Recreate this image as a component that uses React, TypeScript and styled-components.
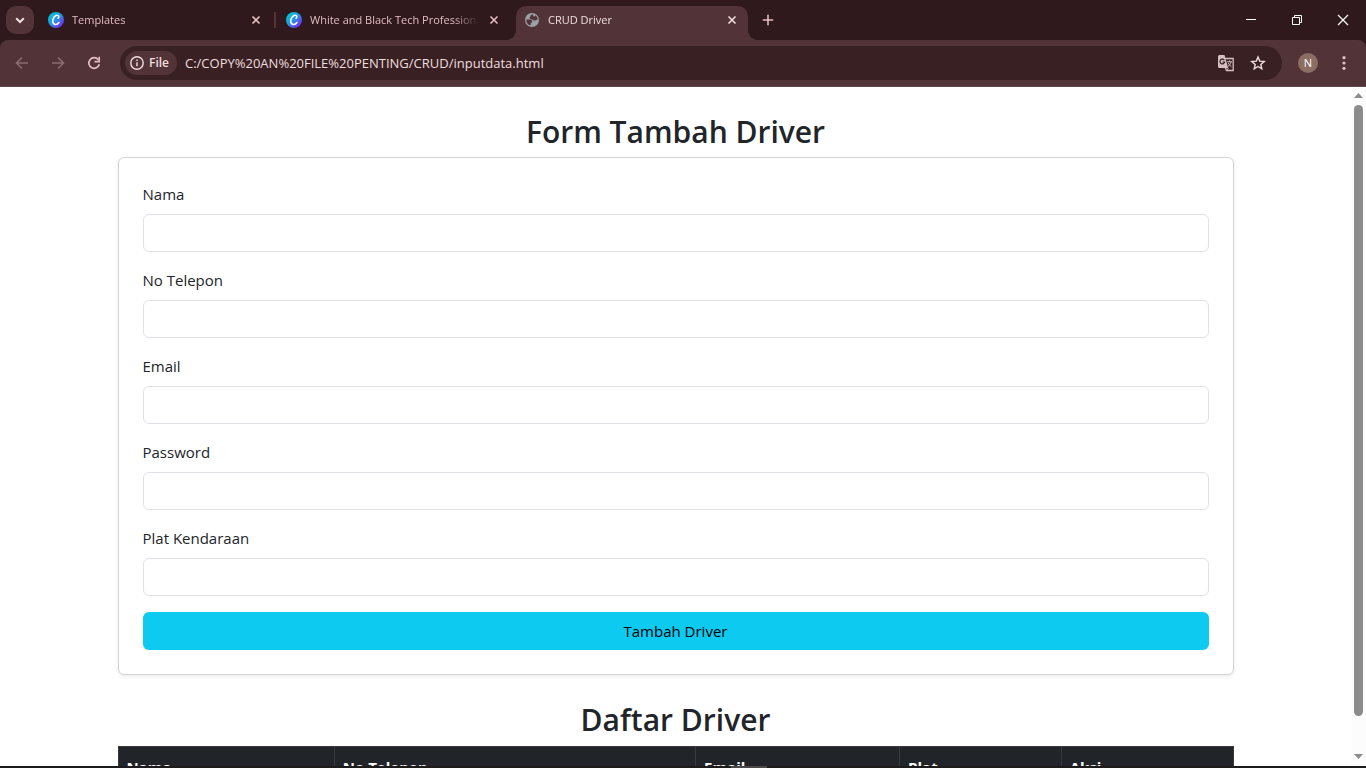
import React from "react";
import styled, { createGlobalStyle, css } from "styled-components";

const color = {
  frame: "#2f191c",
  toolbar: "#523438",
  field: "#382023",
  pink: "#e3bdc0",
  light: "#f0dedf",
  text: "#212529",
  line: "#dee2e6",
};

const GlobalStyle = createGlobalStyle`
  *, *::before, *::after { box-sizing: border-box; }
  body { margin: 0; background: #fff; color: ${color.text}; font: 400 15px/24px "Open Sans", "Noto Sans", sans-serif; }
  button, input { font: inherit; }
  button { padding: 0; border: 0; background: none; color: inherit; }
  svg { display: block; flex: none; }
`;

const Window = styled.div`
  display: flex;
  flex-direction: column;
  height: 100vh;
  overflow: hidden;
  background: ${color.frame};
`;

const TabBar = styled.header`
  display: flex;
  flex: none;
  height: 40px;
  padding-left: 6px;
  color: ${color.pink};
`;

const TabSearch = styled.button`
  display: grid;
  place-items: center;
  flex: none;
  width: 28px;
  height: 28px;
  margin: 6px 6px 0 0;
  border-radius: 10px;
  background: ${color.toolbar};
  color: ${color.light};
`;

const Tabs = styled.div`
  display: flex;
  flex: 0 1 auto;
  gap: 6px;
  min-width: 0;
  padding-top: 6px;
`;

const Tab = styled.div<{ $active?: boolean; $divider?: boolean }>`
  position: relative;
  display: flex;
  align-items: center;
  gap: 8px;
  flex: 0 1 232px;
  width: 232px;
  min-width: 0;
  height: 34px;
  padding: 0 8px 6px;
  font-size: 11px;
  line-height: 16px;

  ${(p) =>
    p.$divider &&
    css`
      &::after {
        content: "";
        position: absolute;
        top: 6px;
        right: -4px;
        width: 2px;
        height: 16px;
        background: ${color.toolbar};
      }
    `}

  ${(p) =>
    p.$active &&
    css`
      border-radius: 10px 10px 0 0;
      background: ${color.toolbar};
      color: ${color.light};

      &::before,
      &::after {
        content: "";
        position: absolute;
        bottom: 0;
        width: 10px;
        height: 10px;
      }
      &::before {
        left: -10px;
        background: radial-gradient(circle at 0 0, transparent 10px, ${color.toolbar} 10px);
      }
      &::after {
        right: -10px;
        background: radial-gradient(circle at 100% 0, transparent 10px, ${color.toolbar} 10px);
      }
    `}
`;

const TabTitle = styled.span`
  flex: 1;
  min-width: 0;
  overflow: hidden;
  white-space: nowrap;
  mask-image: linear-gradient(to right, #000 calc(100% - 24px), transparent);
`;

const IconButton = styled.button<{ $size: number }>`
  display: grid;
  place-items: center;
  flex: none;
  width: ${(p) => p.$size}px;
  height: ${(p) => p.$size}px;
`;

const NewTab = styled(IconButton)`
  margin: 6px 0 0 6px;
`;

const WindowButtons = styled.div`
  display: flex;
  margin-left: auto;
  color: #fff;
`;

const WindowButton = styled.button`
  display: grid;
  place-items: center;
  width: 46px;
  height: 40px;
`;

const Toolbar = styled.div`
  display: flex;
  align-items: center;
  flex: none;
  height: 47px;
  padding: 0 8px;
  border-bottom: 1px solid #61484b;
  border-radius: 8px 8px 0 0;
  background: ${color.toolbar};
  color: ${color.pink};
`;

const Navigation = styled.nav`
  display: flex;
  gap: 8px;
  margin-right: 12px;
`;

const NavButton = styled(IconButton)`
  &:disabled { color: #8b6c70; }
`;

const AddressBar = styled.div`
  display: flex;
  align-items: center;
  flex: 1;
  min-width: 0;
  height: 34px;
  padding: 0 10px 0 5px;
  border-radius: 17px;
  background: ${color.field};
  color: ${color.light};
`;

const SiteChip = styled.button`
  display: flex;
  align-items: center;
  gap: 4px;
  flex: none;
  height: 24px;
  padding: 0 8px 0 4px;
  border-radius: 12px;
  background: ${color.toolbar};
  font-size: 12px;
  font-weight: 600;
`;

const Address = styled.input`
  flex: 1;
  min-width: 0;
  padding: 0 8px;
  border: 0;
  outline: 0;
  background: none;
  color: ${color.light};
  font-size: 13px;
`;

const AddressActions = styled.div`
  display: flex;
  gap: 4px;
`;

const Profile = styled.button`
  flex: none;
  width: 20px;
  height: 20px;
  margin: 0 12px 0 16px;
  border-radius: 50%;
  background: #8d6e63;
  color: #fff;
  font-size: 11px;
  line-height: 20px;
`;

const Viewport = styled.div`
  display: flex;
  flex: 1;
  min-height: 0;
  background: #fff;
`;

const Page = styled.main`
  flex: 1;
  min-width: 0;
  overflow: hidden;
`;

const Container = styled.div`
  max-width: 1140px;
  margin: 0 auto;
  padding: 0 12px;
`;

const Heading = styled.h2`
  margin: 26px 0 6px;
  font-size: 30px;
  font-weight: 600;
  line-height: 1.28;
  text-align: center;
`;

const Card = styled.form`
  padding: 24px;
  border: 1px solid #d3d3d4;
  border-radius: 6px;
  background: #fff;
  box-shadow: 0 2px 4px rgba(0, 0, 0, 0.075);
`;

const Field = styled.div`
  margin-bottom: 16px;
`;

const Label = styled.label`
  display: block;
  width: fit-content;
  margin-bottom: 8px;
`;

const TextInput = styled.input`
  display: block;
  width: 100%;
  height: 38px;
  padding: 6px 12px;
  border: 1px solid ${color.line};
  border-radius: 6px;
  background: #fff;
  color: ${color.text};
`;

const Submit = styled.button`
  display: block;
  width: 100%;
  height: 38px;
  border-radius: 6px;
  background: #0dcaf0;
  color: #000;
`;

const DriverTable = styled.table`
  width: 100%;
  border-collapse: collapse;
  table-layout: fixed;
  background: ${color.text};
  color: #fff;
`;

const HeadCell = styled.th<{ $width: string }>`
  width: ${(p) => p.$width};
  padding: 8px;
  border: 1px solid #373b3e;
  font-weight: 700;
  text-align: left;
`;

const ScrollTrack = styled.div`
  display: flex;
  flex-direction: column;
  align-items: center;
  flex: none;
  width: 15px;
  padding: 6px 0;
  background: #fcfcfc;
  color: #8b8b8b;
`;

const ScrollArea = styled.div`
  flex: 1;
  width: 9px;
  margin: 6px 0;
`;

const ScrollThumb = styled.div`
  height: 95%;
  border-radius: 5px;
  background: #8b8b8b;
`;

const Taskbar = styled.footer`
  display: flex;
  justify-content: center;
  flex: none;
  height: 2px;
  padding-left: 132px;
  background: #1c1c1d;
`;

const TaskbarItem = styled.div`
  width: 36px;
  background: #4a4a4a;
`;

const CanvaLogo = ({ id }: { id: string }) => (
  <svg width="16" height="16" viewBox="0 0 16 16" aria-hidden="true">
    <defs>
      <linearGradient id={id} x1="0.1" y1="0.1" x2="0.85" y2="0.9">
        <stop offset="0" stopColor="#00c9cc" />
        <stop offset="0.5" stopColor="#2595e3" />
        <stop offset="1" stopColor="#7a25f0" />
      </linearGradient>
    </defs>
    <circle cx="8" cy="8" r="8" fill={`url(#${id})`} />
    <path
      d="M10 6.300c1.100-.6 1.300-3-.7-3C6.600 3.300 4.700 6.500 4.700 9.100c0 2.100 1.100 3.400 2.900 3.400 1.500 0 2.700-1 3.400-2.200"
      fill="none"
      stroke="#fff"
      strokeWidth="1.5"
      strokeLinecap="round"
    />
  </svg>
);

const GlobeIcon = () => (
  <svg width="16" height="16" viewBox="0 0 16 16" aria-hidden="true">
    <circle cx="8" cy="8" r="7" fill="#9aa0a6" />
    <path
      d="M9.200 2.500C7.600 2.400 6.600 3 6.500 4.100c0 .8-.9 1-.9 1.900 0 1 .9 1.300 1.900 1.300.9 0 1.200.5 1.300 1.200h1.700c1 0 1.400-.8 2.200-.8h.9c.1-2-.9-3.700-2.300-4.500 0 .9-.5 1.300-1.300 1.300-.8-.3-1.100-1.200-.8-2Z"
      fill={color.toolbar}
    />
    <path
      d="M2.400 7.500h3.200c1.700 0 2.600.8 2.600 2.200 0 .8-.6 1.100-1.400 1.100v2.500c-2.600-.3-4.700-2.600-4.400-5.800Z"
      fill={color.toolbar}
    />
  </svg>
);

const CloseIcon = ({ size = 16, inset = 4.5, width = 1.6 }: { size?: number; inset?: number; width?: number }) => (
  <svg width={size} height={size} viewBox="0 0 16 16" stroke="currentColor" strokeWidth={width} aria-hidden="true">
    <path d={`M${inset} ${inset}L${16 - inset} ${16 - inset}M${16 - inset} ${inset}L${inset} ${16 - inset}`} />
  </svg>
);

const Stroke = ({ d, width = 1.6, size = 16 }: { d: string; width?: number; size?: number }) => (
  <svg width={size} height={size} viewBox="0 0 16 16" fill="none" stroke="currentColor" strokeWidth={width} aria-hidden="true">
    <path d={d} />
  </svg>
);

const ReloadIcon = () => (
  <svg width="16" height="16" viewBox="0 0 16 16" fill="none" stroke="currentColor" strokeWidth="1.7" aria-hidden="true">
    <path d="M12.300 4.700A5.300 5.300 0 1 0 13.300 9.300" />
    <path d="M13.200 1.800v4.900H8.500" />
  </svg>
);

const InfoIcon = () => (
  <svg width="16" height="16" viewBox="0 0 16 16" fill="none" stroke="currentColor" strokeWidth="1.400" aria-hidden="true">
    <circle cx="8" cy="8" r="6.200" />
    <path d="M8 7.200v4M8 4.500v1.500" />
  </svg>
);

const TranslateIcon = () => (
  <svg width="18" height="18" viewBox="0 0 18 18" fill="none" aria-hidden="true">
    <path d="M8 4.500h8.200v12H9.500L8 13" stroke="#d5bfc1" strokeWidth="1.300" />
    <path d="M1.500 1h6l3.700 13H2.500a1.500 1.500 0 0 1-1.500-1.500v-10A1.500 1.500 0 0 1 2.500 1Z" fill="#d5bfc1" />
    <path d="M7.300 6.100A2.400 2.400 0 1 0 7.700 8H5.400" stroke={color.field} strokeWidth="1.200" />
    <path d="M10 7.800h5M12.500 6.500v1.300M14 8c-.4 2-1.700 3.500-3 4.500M11.300 9c.6 1.500 1.900 2.700 3.200 3.700M9.500 16.500l2-2.500" stroke="#d5bfc1" />
  </svg>
);

const StarIcon = () => (
  <svg width="16" height="16" viewBox="0 0 16 16" fill="none" stroke="currentColor" strokeWidth="1.400" aria-hidden="true">
    <path d="M8 2l1.700 4.100 4.500.4-3.400 2.900 1 4.400L8 11.500l-3.800 2.300 1-4.400L1.800 6.500l4.500-.4Z" />
  </svg>
);

const MenuIcon = () => (
  <svg width="16" height="16" viewBox="0 0 16 16" fill="currentColor" aria-hidden="true">
    <circle cx="8" cy="2.700" r="1.600" />
    <circle cx="8" cy="8" r="1.600" />
    <circle cx="8" cy="13.300" r="1.600" />
  </svg>
);

const Arrow = ({ down }: { down?: boolean }) => (
  <svg width="9" height="6" viewBox="0 0 9 6" fill="currentColor" aria-hidden="true">
    <path d={down ? "M0 0h9L4.500 5Z" : "M0 5h9L4.500 0Z"} />
  </svg>
);

const fields = [
  { id: "nama", label: "Nama", type: "text" },
  { id: "telepon", label: "No Telepon", type: "text" },
  { id: "email", label: "Email", type: "email" },
  { id: "password", label: "Password", type: "password" },
  { id: "plat", label: "Plat Kendaraan", type: "text" },
];

const columns = [
  { title: "Nama", width: "19.4%" },
  { title: "No Telepon", width: "32.4%" },
  { title: "Email", width: "18.3%" },
  { title: "Plat", width: "14.5%" },
  { title: "Aksi", width: "15.4%" },
];

export default function App() {
  return (
    <>
      <GlobalStyle />
      <Window>
        <TabBar>
          <TabSearch aria-label="Search tabs">
            <Stroke d="M4.200 6.200L8 10l3.800-3.800" width={2} />
          </TabSearch>
          <Tabs>
            <Tab $divider>
              <CanvaLogo id="canva-a" />
              <TabTitle>Templates</TabTitle>
              <IconButton $size={16} aria-label="Close tab"><CloseIcon /></IconButton>
            </Tab>
            <Tab>
              <CanvaLogo id="canva-b" />
              <TabTitle>White and Black Tech Professional</TabTitle>
              <IconButton $size={16} aria-label="Close tab"><CloseIcon /></IconButton>
            </Tab>
            <Tab $active>
              <GlobeIcon />
              <TabTitle>CRUD Driver</TabTitle>
              <IconButton $size={16} aria-label="Close tab"><CloseIcon /></IconButton>
            </Tab>
          </Tabs>
          <NewTab $size={28} aria-label="New tab">
            <Stroke d="M8 2.800v10.400M2.800 8h10.400" />
          </NewTab>
          <WindowButtons>
            <WindowButton aria-label="Minimize"><Stroke d="M3 7.500h10" width={1} /></WindowButton>
            <WindowButton aria-label="Restore"><Stroke d="M3.500 5.500h7v7h-7zM5.500 5.500v-2h7v7h-2" width={1} /></WindowButton>
            <WindowButton aria-label="Close"><CloseIcon inset={3} width={1.2} /></WindowButton>
          </WindowButtons>
        </TabBar>

        <Toolbar>
          <Navigation>
            <NavButton $size={28} disabled aria-label="Back"><Stroke d="M14 8H3M8 2.500L2.500 8 8 13.500" /></NavButton>
            <NavButton $size={28} disabled aria-label="Forward"><Stroke d="M2 8h11M8 2.500L13.500 8 8 13.500" /></NavButton>
            <NavButton $size={28} aria-label="Reload"><ReloadIcon /></NavButton>
          </Navigation>
          <AddressBar>
            <SiteChip><InfoIcon />File</SiteChip>
            <Address aria-label="Address" defaultValue="C:/COPY%20AN%20FILE%20PENTING/CRUD/inputdata.html" />
            <AddressActions>
              <IconButton $size={28} aria-label="Translate"><TranslateIcon /></IconButton>
              <IconButton $size={28} aria-label="Bookmark"><StarIcon /></IconButton>
            </AddressActions>
          </AddressBar>
          <Profile aria-label="Profile">N</Profile>
          <IconButton $size={28} aria-label="Menu"><MenuIcon /></IconButton>
        </Toolbar>

        <Viewport>
          <Page>
            <Container>
              <Heading>Form Tambah Driver</Heading>
              <Card onSubmit={(event) => event.preventDefault()}>
                {fields.map((field) => (
                  <Field key={field.id}>
                    <Label htmlFor={field.id}>{field.label}</Label>
                    <TextInput id={field.id} type={field.type} />
                  </Field>
                ))}
                <Submit type="submit">Tambah Driver</Submit>
              </Card>
              <Heading>Daftar Driver</Heading>
              <DriverTable>
                <thead>
                  <tr>
                    {columns.map((column) => (
                      <HeadCell key={column.title} $width={column.width} scope="col">{column.title}</HeadCell>
                    ))}
                  </tr>
                </thead>
              </DriverTable>
            </Container>
          </Page>
          <ScrollTrack aria-hidden="true">
            <Arrow />
            <ScrollArea><ScrollThumb /></ScrollArea>
            <Arrow down />
          </ScrollTrack>
        </Viewport>
        <Taskbar><TaskbarItem /></Taskbar>
      </Window>
    </>
  );
}
